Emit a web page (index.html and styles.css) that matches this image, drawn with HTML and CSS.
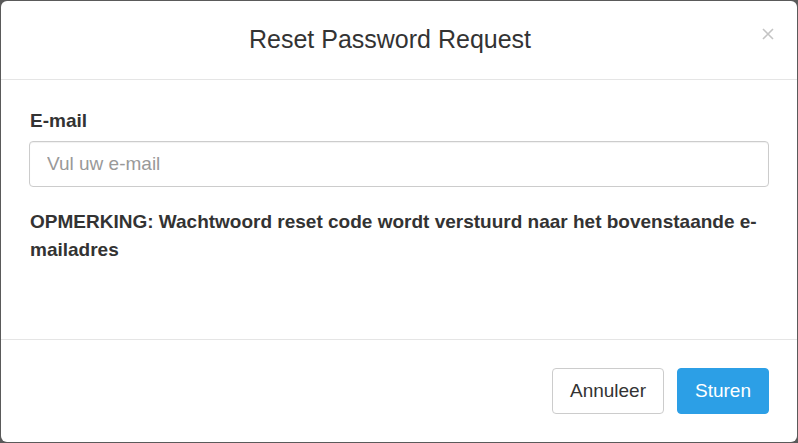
FILE: index.html
```html
<!DOCTYPE html>
<html lang="nl">
<head>
<meta charset="utf-8">
<title>Reset Password Request</title>
<link rel="stylesheet" href="styles.css">
</head>
<body>
<div class="modal">
  <div class="modal-header">
    <h4 class="modal-title">Reset Password Request</h4>
    <button class="close" type="button" aria-label="Close">
      <svg width="12" height="12" viewBox="0 0 12 12"><path d="M1 1L11 11M11 1L1 11" stroke="#c4c4c4" stroke-width="1.6" fill="none"/></svg>
    </button>
  </div>
  <div class="modal-body">
    <label class="label" for="email">E-mail</label>
    <input class="input" id="email" type="text" placeholder="Vul uw e-mail">
    <p class="note">OPMERKING: Wachtwoord reset code wordt verstuurd naar het bovenstaande e-mailadres</p>
  </div>
  <div class="modal-footer">
    <button class="btn btn-default" type="button">Annuleer</button>
    <button class="btn btn-primary" type="button">Sturen</button>
  </div>
</div>
</body>
</html>
```
FILE: styles.css
```css
* { box-sizing: border-box; }
html, body { height: 100%; }
body {
  margin: 0;
  padding: 1px 1px 1px 1px;
  background: #5a5a5a;
  font-family: "Liberation Sans", Arial, sans-serif;
  color: #333;
}
.modal {
  height: 441px;
  background: #fff;
  border-radius: 6px;
  display: flex;
  flex-direction: column;
}
.modal-header {
  height: 79px;
  border-bottom: 1px solid #e5e5e5;
  display: flex;
  align-items: center;
  justify-content: center;
  padding-right: 18px;
  position: relative;
}
.modal-title {
  margin: -2px 0 0 0;
  font-size: 25px;
  font-weight: normal;
  color: #333;
  line-height: 1;
}
.close {
  position: absolute;
  right: 23px;
  top: 27px;
  border: 0;
  background: none;
  padding: 0;
  width: 12px;
  height: 12px;
  display: flex;
}
.modal-body {
  height: 260px;
  padding: 29px 28px 0 28px;
  display: flex;
  flex-direction: column;
  border-bottom: 1px solid #e5e5e5;
}
.label {
  display: block;
  font-size: 19px;
  font-weight: bold;
  line-height: 24px;
  margin-bottom: 8px;
  margin-left: 1px;
}
.input {
  height: 46px;
  width: 100%;
  border: 1px solid #ccc;
  border-radius: 4px;
  padding: 0 17px;
  font-family: inherit;
  font-size: 19px;
  color: #333;
  box-shadow: inset 0 1px 1px rgba(0,0,0,0.06);
}
.input::placeholder { color: #999; }
.note {
  margin: 21px 0 0 1px;
  font-size: 19px;
  font-weight: bold;
  line-height: 28px;
}
.modal-footer {
  flex: 1;
  display: flex;
  align-items: center;
  justify-content: flex-end;
  gap: 13px;
  padding: 0 28px 1px;
}
.btn {
  height: 46px;
  padding: 0 17px;
  font-family: inherit;
  font-size: 19px;
  border-radius: 4px;
  border: 1px solid #ccc;
  background: #fff;
  color: #333;
}
.btn-primary {
  background: #2c9fe6;
  border-color: #2c9fe6;
  color: #fff;
}
```
